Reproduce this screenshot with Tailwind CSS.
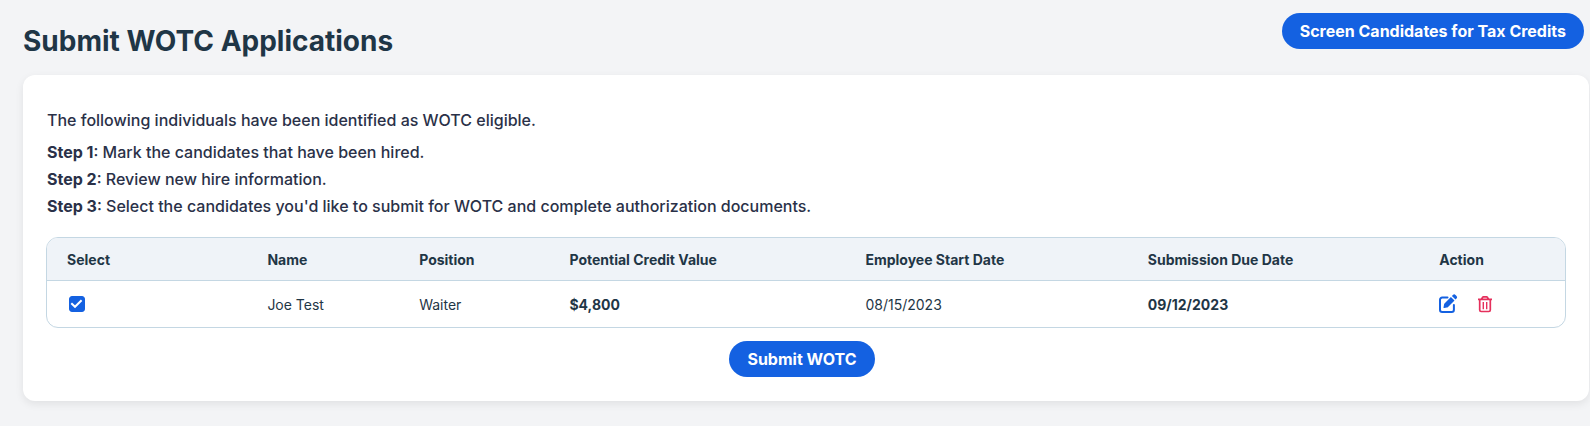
<!DOCTYPE html>
<html lang="en">
  <head>
    <meta charset="UTF-8" />
    <meta name="viewport" content="width=device-width, initial-scale=1.0" />
    <title>Submit WOTC Applications</title>
    <script src="https://cdn.jsdelivr.net/npm/@tailwindcss/browser@4"></script>
  </head>
  <body
    class="min-h-screen bg-[#f3f4f6] font-['Inter',sans-serif] text-[#1f3646]"
  >
    <main class="pl-[23px] pr-px">
      <!-- Header -->
      <header class="flex items-start justify-between pt-[13px] pb-4 pr-[5px]">
        <h1 class="pt-[10px] text-[28px] leading-9 font-bold">
          Submit WOTC Applications
        </h1>
        <button
          type="button"
          class="h-9 cursor-pointer rounded-full bg-[#1461e1] px-[18px] text-base font-bold text-white hover:bg-blue-700"
        >
          Screen Candidates for Tax Credits
        </button>
      </header>

      <section
        class="rounded-xl bg-white px-[23px] pt-8 pb-6 shadow-[0_3px_8px_rgba(0,0,0,0.08)]"
      >
        <!-- Instructions -->
        <div class="px-px text-base leading-[27px] font-medium text-[#2a3148]">
          <p class="mb-[5px]">
            The following individuals have been identified as WOTC eligible.
          </p>
          <p><b>Step 1</b>: Mark the candidates that have been hired.</p>
          <p><b>Step 2</b>: Review new hire information.</p>
          <p>
            <b>Step 3</b>: Select the candidates you'd like to submit for WOTC
            and complete authorization documents.
          </p>
        </div>

        <!-- Candidates -->
        <div
          class="mt-[17px] overflow-hidden rounded-xl border border-[#c4d7e3]"
        >
          <table class="w-full table-fixed text-left text-sm">
            <thead class="bg-[#eff3f8]">
              <tr class="h-[42px] border-b border-[#c4d7e3]">
                <th class="w-[13.2%] pt-0.5 pl-5 font-bold">Select</th>
                <th class="w-[10%] pt-0.5 pl-5 font-bold">Name</th>
                <th class="w-[9.9%] pt-0.5 pl-5 font-bold">Position</th>
                <th class="w-[19.5%] pt-0.5 pl-5 font-bold">
                  Potential Credit Value
                </th>
                <th class="w-[18.6%] pt-0.5 pl-5 font-bold">
                  Employee Start Date
                </th>
                <th class="w-[19.2%] pt-0.5 pl-5 font-bold">
                  Submission Due Date
                </th>
                <th class="pt-0.5 pl-5 font-bold">Action</th>
              </tr>
            </thead>
            <tbody>
              <tr class="h-[47px]">
                <td class="pl-[22px]">
                  <label class="relative block size-4">
                    <input
                      type="checkbox"
                      checked
                      aria-label="Select Joe Test"
                      class="peer block size-4 cursor-pointer appearance-none rounded-[3px] border border-[#1461e1] checked:bg-[#1461e1]"
                    />
                    <svg
                      class="pointer-events-none absolute inset-0 hidden size-4 peer-checked:block"
                      viewBox="0 0 16 16"
                      fill="none"
                      stroke="white"
                      stroke-width="2"
                    >
                      <path d="M2.3 7.2 6 10.8 12.6 4.2" />
                    </svg>
                  </label>
                </td>
                <td class="pt-0.5 pl-5">Joe Test</td>
                <td class="pt-0.5 pl-5">Waiter</td>
                <td class="pt-0.5 pl-5 font-bold">$4,800</td>
                <td class="pt-0.5 pl-5">08/15/2023</td>
                <td class="pt-0.5 pl-5 font-bold">09/12/2023</td>
                <td class="pl-5">
                  <div class="flex items-center gap-5">
                    <button
                      type="button"
                      aria-label="Edit"
                      class="cursor-pointer text-[#1461e1]"
                    >
                      <svg class="h-5 w-[19px]" viewBox="0 0 19 20">
                        <path
                          d="M8.5 3.600H3.200A2.200 2.200 0 0 0 1 5.800V15.800A2.200 2.200 0 0 0 3.200 18H12.700A2.200 2.200 0 0 0 14.900 15.800V11"
                          fill="none"
                          stroke="currentColor"
                          stroke-width="2"
                          stroke-linecap="round"
                        />
                        <path
                          d="M11.900 2.900 15.500 6.500 9 13Q8.500 13.500 7.900 13.600L5.200 14.100Q4.400 14.200 4.500 13.400L5 10.700Q5.100 9.900 5.500 9.400ZM12.900 1.900 13.900.9Q15.200-.2 16.500.9L17.500 1.900Q18.700 3.200 17.500 4.500L16.500 5.500Z"
                          fill="currentColor"
                        />
                      </svg>
                    </button>
                    <button
                      type="button"
                      aria-label="Delete"
                      class="cursor-pointer text-[#e5305c]"
                    >
                      <svg
                        class="h-[18px] w-[14px]"
                        viewBox="0 0 14 18"
                        fill="none"
                        stroke="currentColor"
                        stroke-width="1.700"
                      >
                        <path
                          d="M0 4.400H14M3.600 4 4.700 2.300Q4.900 1.900 5.400 1.900H8.600Q9.100 1.900 9.300 2.300L10.400 4M1.700 4.500V15Q1.700 16.500 3.200 16.500H10.800Q12.300 16.500 12.300 15V4.500"
                        />
                        <path d="M5.300 7V14.200M8.700 7V14.200" stroke-width="1.400" />
                      </svg>
                    </button>
                  </div>
                </td>
              </tr>
            </tbody>
          </table>
        </div>

        <div class="mt-[13px] mr-2 flex justify-center">
          <button
            type="button"
            class="h-9 cursor-pointer rounded-full bg-[#1461e1] px-[18px] text-base font-bold text-white hover:bg-blue-700"
          >
            Submit WOTC
          </button>
        </div>
      </section>
    </main>
  </body>
</html>
